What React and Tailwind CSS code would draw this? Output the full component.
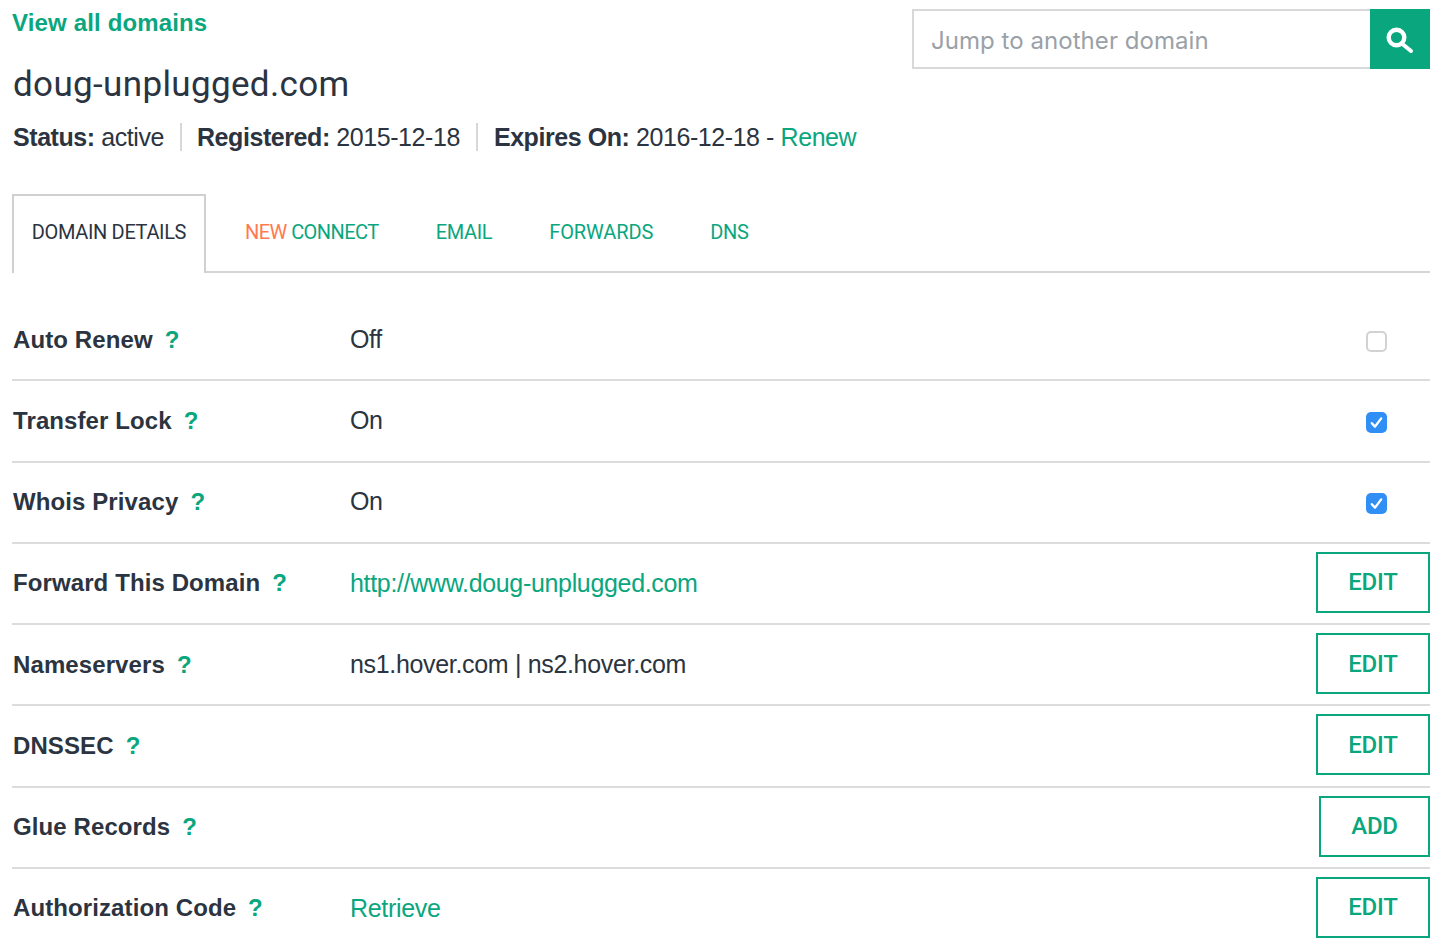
const din = { fontFamily: 'Roboto, sans-serif' }

const rows = [
  { label: 'Auto Renew', value: 'Off', control: 'off' },
  { label: 'Transfer Lock', value: 'On', control: 'on' },
  { label: 'Whois Privacy', value: 'On', control: 'on' },
  { label: 'Forward This Domain', value: 'http://www.doug-unplugged.com', link: true, control: 'EDIT' },
  { label: 'Nameservers', value: 'ns1.hover.com | ns2.hover.com', control: 'EDIT' },
  { label: 'DNSSEC', value: '', control: 'EDIT' },
  { label: 'Glue Records', value: '', control: 'ADD' },
  { label: 'Authorization Code', value: 'Retrieve', link: true, control: 'EDIT' },
]

const Control = ({ type }) => {
  if (type === 'off') {
    return <span className="mt-[3px] mr-[43px] block h-[21px] w-[21px] rounded-[5px] border-2 border-[#d2d2d2] bg-white" />
  }
  if (type === 'on') {
    return (
      <span className="mt-[3px] mr-[43px] flex h-[21px] w-[21px] items-center justify-center rounded-[5px] bg-[#2f8ff5]">
        <svg viewBox="0 0 21 21" className="h-[21px] w-[21px]" fill="none">
          <path d="M5.8 11.2 L9 14.6 L15.2 6.4" stroke="#fff" strokeWidth="2.4" strokeLinecap="round" strokeLinejoin="round" />
        </svg>
      </span>
    )
  }
  return (
    <button
      className={`mb-[2px] flex h-[61px] items-center justify-center border-2 border-[#0aa67e] text-[24px] font-medium tracking-[-0.2px] text-[#0aa67e] ${type === 'ADD' ? 'w-[111px]' : 'w-[114px]'}`}
      style={din}
    >
      {type}
    </button>
  )
}

const Row = ({ row, last }) => (
  <div className={`flex h-[81.25px] items-center border-b-2 ${last ? 'border-transparent' : 'border-[#dcdcdc]'}`}>
    <div className="flex w-[338px] items-center gap-[12px] pl-px text-[24px] font-bold tracking-[0.1px] text-[#2b3440]">
      <span>{row.label}</span>
      <span className="text-[#0aa67e]">?</span>
    </div>
    <div className={`flex-1 text-[25px] tracking-[-0.33px] ${row.link ? 'text-[#0aa67e]' : 'text-[#2b3440]'}`}>{row.value}</div>
    <Control type={row.control} />
  </div>
)

const App = () => {
  return (
    <div className="h-[946px] overflow-hidden bg-white pl-3 pr-[10px] text-[#2b3440]" style={{ fontFamily: '"Liberation Sans", Arial, sans-serif' }}>
      <div className="flex items-start justify-between">
        <div>
          <a className="mt-[8px] block text-[24px] leading-[30px] font-bold tracking-[0.15px] text-[#0aa67e]">View all domains</a>
          <h1 className="mt-[25px] pl-px text-[35px] leading-[44px] tracking-[0.35px]" style={din}>doug-unplugged.com</h1>
          <div className="mt-[16px] flex items-center pl-px text-[25px] leading-[28px] tracking-[-0.43px]">
            <span className="border-r-2 border-[#d8d8d8] pr-[16px]"><b>Status:</b> active</span>
            <span className="border-r-2 border-[#d8d8d8] pr-[16px] pl-[15px]"><b>Registered:</b> 2015-12-18</span>
            <span className="pl-[16px]"><b>Expires On:</b> 2016-12-18 - <a className="text-[#0aa67e]">Renew</a></span>
          </div>
        </div>
        <div className="mt-[9px] flex h-[60px] w-[518px]">
          <div className="flex flex-1 items-center border-2 border-r-0 border-[#d6d8da] pt-[3px] pl-[17px] text-[24px] tracking-[0.05px] text-[#9aa1a7]" style={{ fontFamily: 'Inter, sans-serif' }}>Jump to another domain</div>
          <div className="flex w-[60px] items-center justify-center bg-[#0aa67e]">
            <svg viewBox="0 0 30 30" className="h-[30px] w-[30px]" fill="none">
              <circle cx="11.5" cy="13.5" r="7.8" stroke="#fff" strokeWidth="4.4" />
              <path d="M18 20.5 L26 27" stroke="#fff" strokeWidth="4" strokeLinecap="round" />
            </svg>
          </div>
        </div>
      </div>

      <div className="mt-[43px] flex h-[79px] items-stretch border-b-2 border-[#d6d6d6] text-[20px] tracking-[-0.35px] text-[#0aa67e]" style={din}>
        <div className="-mb-[2px] flex w-[194px] items-start justify-center border-2 border-b-0 border-[#d0d0d0] bg-white pt-[21px] text-[#2b3440]">DOMAIN DETAILS</div>
        <div className="flex items-start gap-[57px] pt-[23px] pl-[39px]">
          <span className="tracking-[-0.55px]"><span className="text-[#ff7a50]">NEW</span> CONNECT</span>
          <span>EMAIL</span>
          <span className="tracking-[-0.1px]">FORWARDS</span>
          <span>DNS</span>
        </div>
      </div>

      <div className="mt-[27px]">
        {rows.map((row, i) => (
          <Row key={row.label} row={row} last={i === rows.length - 1} />
        ))}
      </div>
    </div>
  )
}

export default App
